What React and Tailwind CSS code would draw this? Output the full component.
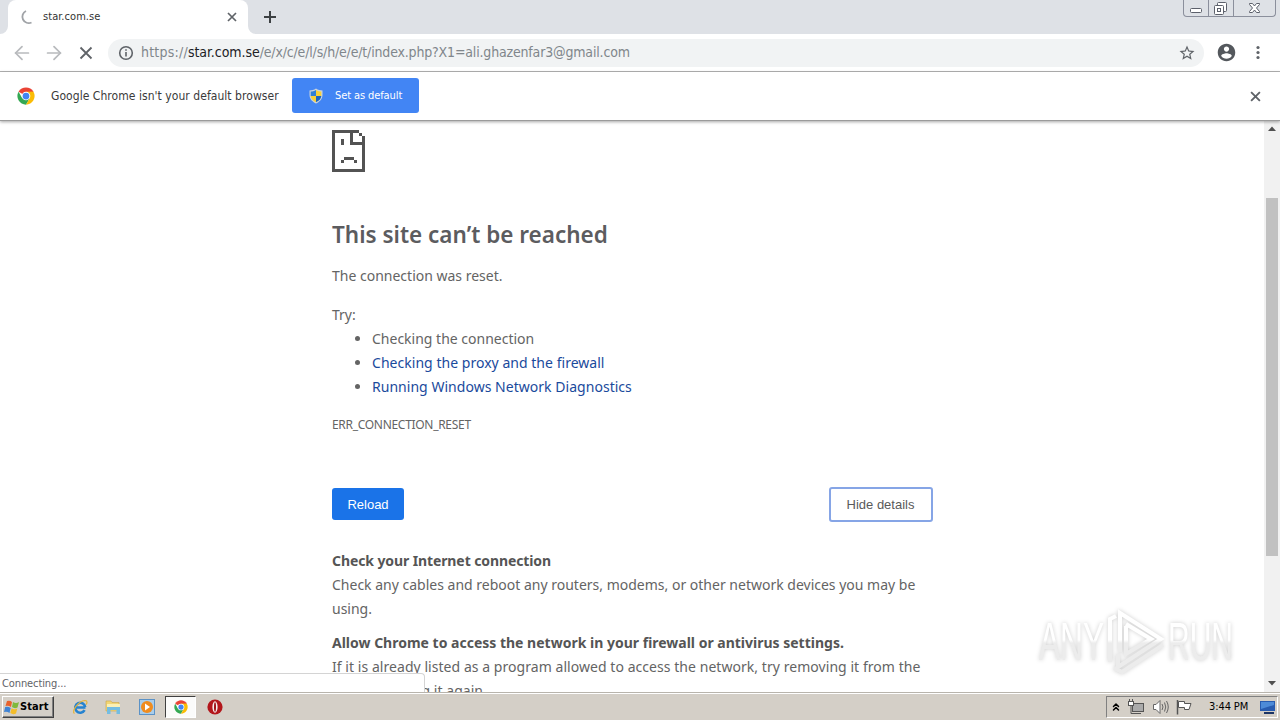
import { ArrowLeft, ArrowRight, ChevronsUp } from 'lucide-react';

const LINKS = ['Checking the proxy and the firewall', 'Running Windows Network Diagnostics'];

const ChromeLogo = ({ className }) => (
  <svg className={className} viewBox="0 0 48 48">
    <circle cx="24" cy="24" r="23" fill="#fff" />
    <path d="M24 24 L4.1 12.5 A23 23 0 0 1 43.9 12.5 Z" fill="#ea4335" />
    <path d="M4.1 12.5 A23 23 0 0 0 24 47 L34 29.7 L24 24 L14 29.7 Z" fill="#34a853" />
    <path d="M43.9 12.5 A23 23 0 0 1 24 47 L34 29.7 L24 13 Z" fill="#fbbc05" />
    <path d="M24 12.5 H43.9 L34 24 Z" fill="#fbbc05" />
    <circle cx="24" cy="24" r="11.5" fill="#fff" />
    <circle cx="24" cy="24" r="9" fill="#4285f4" />
  </svg>
);

const Shield = () => (
  <svg className="w-[14px] h-4" viewBox="0 0 14 16">
    <path d="M7 .5 C5 1.900 2.500 2.400 .5 2.400 V7 C.5 11.500 4 14 7 15.500 C10 14 13.500 11.500 13.500 7 V2.400 C11.500 2.400 9 1.900 7 .5Z" fill="#c9d3dc" />
    <path d="M7 2 C5 3.200 3.500 3.500 1.700 3.500 V8 H7Z" fill="#2f7fd6" />
    <path d="M7 2 C9 3.200 10.500 3.500 12.300 3.500 V8 H7Z" fill="#f7d038" />
    <path d="M1.700 8 H7 V14.200 C4 12.700 2 11 1.700 8Z" fill="#f7d038" />
    <path d="M12.300 8 H7 V14.200 C10 12.700 12 11 12.300 8Z" fill="#1d64bd" />
  </svg>
);

const Cross = ({ className }) => (
  <svg className={className} viewBox="0 0 10 10" fill="none" stroke="currentColor">
    <path d="M1 1 L9 9 M9 1 L1 9" strokeWidth="1.700" />
  </svg>
);

const SadPage = () => (
  <svg className="block w-[33px] h-[42px]" viewBox="0 0 33 42" fill="#535353" shapeRendering="crispEdges">
    <path d="M0 0H27V3H3V39H30V15H18V0H21V12H30V6H33V42H0Z" />
    <path d="M27 3H30V6H27Z M9 9H12V15H9Z M12 27H22V30H12Z M9 30H12V33H9Z M22 30H25V33H22Z" />
  </svg>
);

const WindowButtons = () => (
  <div className="flex w-[93px] h-[17px] border border-t-0 border-[#8b8f9c] rounded-b-[4px] text-[#5c606b]">
    <div className="w-[25px] border-r border-[#8b8f9c]">
      <svg className="w-6 h-4" viewBox="0 0 24 16" fill="#fff" stroke="currentColor">
        <rect x="6.500" y="8.500" width="11" height="4" rx="1" />
      </svg>
    </div>
    <div className="w-[25px] border-r border-[#8b8f9c]">
      <svg className="w-6 h-4" viewBox="0 0 24 16" fill="#fff" stroke="currentColor">
        <rect x="8.500" y="2.500" width="9" height="9" rx="1" />
        <rect x="5.500" y="5.500" width="9" height="9" rx="1" />
        <rect x="8.500" y="8.500" width="3" height="3" />
      </svg>
    </div>
    <svg className="w-[41px] h-4" viewBox="0 0 41 16" fill="#fff" stroke="currentColor">
      <path d="M15.500 3.500H18.500L20.500 6L22.500 3.500H25.500V4.500L22.500 8L25.500 11.500V12.500H22.500L20.500 10L18.500 12.500H15.500V11.500L18.500 8L15.500 4.500Z" />
    </svg>
  </div>
);

const TabStrip = () => (
  <div className="flex h-[34px] bg-[#dee1e6] pl-2">
    <div className="relative flex items-center w-[240px] h-[34px] bg-white rounded-t-lg pl-3 pr-[11px]">
      <svg className="absolute left-[-8px] bottom-0 w-2 h-2" viewBox="0 0 8 8" fill="#fff"><path d="M8 0V8H0A8 8 0 0 0 8 0Z" /></svg>
      <svg className="absolute right-[-8px] bottom-0 w-2 h-2" viewBox="0 0 8 8" fill="#fff"><path d="M0 0V8H8A8 8 0 0 1 0 0Z" /></svg>
      <svg className="w-4 h-4" viewBox="0 0 16 16" fill="none" stroke="#a0a3a7" strokeWidth="1.800">
        <path d="M6 2 A6.200 6.200 0 0 0 11.500 13.500" />
      </svg>
      <span className="flex-1 ml-[7px] pt-px text-[11px] tracking-[0.05px] text-[#333]">star.com.se</span>
      <Cross className="w-[10px] h-[10px] text-[#5f6368]" />
    </div>
    <svg className="w-3 h-3 ml-4 mt-[11px]" viewBox="0 0 12 12" stroke="#3c4043" strokeWidth="2"><path d="M6 0V12M0 6H12" /></svg>
    <div className="ml-auto mr-1"><WindowButtons /></div>
  </div>
);

const Toolbar = () => (
  <div className="flex items-center h-[38px] bg-white border-b border-[#b4b4b4] pl-[11px] pr-3">
    <ArrowLeft className="w-[22px] h-[22px]" color="#b8babd" strokeWidth={1.9} />
    <ArrowRight className="w-[22px] h-[22px] ml-[10px]" color="#b8babd" strokeWidth={1.9} />
    <svg className="w-[14px] h-[14px] ml-[14px]" viewBox="0 0 14 14" stroke="#5f6368" strokeWidth="1.800">
      <path d="M1.500 1.500L12.500 12.500M12.500 1.500L1.500 12.500" />
    </svg>
    <div className="flex items-center flex-1 h-7 ml-[15px] rounded-full bg-[#f1f3f4] pl-[10px] pr-[9px]">
      <svg className="w-4 h-4" viewBox="0 0 16 16" fill="none" stroke="#5f6368">
        <circle cx="8" cy="8" r="6.300" strokeWidth="1.600" />
        <path d="M8 7V11.500M8 4.300V5.800" strokeWidth="1.600" />
      </svg>
      <span className="flex-1 ml-[7px] pb-px text-[14px] tracking-[-0.17px] text-[#80868b] whitespace-nowrap">
        <span className="tracking-[0.22px]">https://</span>
        <span className="tracking-[-0.05px] text-[#202124]">star.com.se</span>
        /e/x/c/e/l/s/h/e/e/t/index.php?X1=ali.ghazenfar3@gmail.com
      </span>
      <svg className="w-[18px] h-[18px] mr-[-1px]" viewBox="0 0 24 24" fill="#5f6368">
        <path d="M22 9.240l-7.190-.62L12 2 9.190 8.630 2 9.240l5.460 4.730L5.820 21 12 17.270 18.180 21l-1.630-7.030L22 9.240zM12 15.400l-3.760 2.270 1-4.280-3.320-2.880 4.380-.38L12 6.100l1.710 4.040 4.380.38-3.320 2.880 1 4.280L12 15.400z" />
      </svg>
    </div>
    <svg className="w-[21px] h-[21px] ml-3 mr-px mb-px" viewBox="0 0 24 24" fill="#54585d">
      <path d="M12 2C6.480 2 2 6.480 2 12s4.480 10 10 10 10-4.480 10-10S17.520 2 12 2zm0 3c1.660 0 3 1.340 3 3s-1.340 3-3 3-3-1.340-3-3 1.340-3 3-3zm0 14.200c-2.500 0-4.710-1.280-6-3.220.030-1.990 4-3.080 6-3.080 1.990 0 5.970 1.090 6 3.080-1.290 1.940-3.500 3.220-6 3.220z" />
    </svg>
    <svg className="w-5 h-4 ml-[10px]" viewBox="0 0 20 16" fill="#5f6368">
      <circle cx="10" cy="2.500" r="1.600" /><circle cx="10" cy="7.500" r="1.600" /><circle cx="10" cy="12.500" r="1.600" />
    </svg>
  </div>
);

const DefaultBrowserBar = () => (
  <div className="relative z-10 flex items-center h-[49px] bg-white border-b border-[#9b9b9b] shadow-[0_1px_3px_rgba(0,0,0,0.35)] pl-[17px] pr-[19px]">
    <ChromeLogo className="w-[18px] h-[18px]" />
    <span className="w-[241px] ml-4 text-[12px] tracking-[0.05px] text-[#3a3a3a] whitespace-nowrap">Google Chrome isn't your default browser</span>
    <button className="flex items-center w-[127px] h-[35px] mb-px rounded-[3px] bg-[#4285f4] pl-[17px] text-white">
      <Shield />
      <span className="ml-3 pt-px text-[11px] tracking-[-0.1px] whitespace-nowrap">Set as default</span>
    </button>
    <Cross className="w-[11px] h-[11px] ml-auto text-[#5f6368]" />
  </div>
);

const ErrorPage = () => (
  <div className="w-[600px] ml-[332px] pt-[9px] font-['Noto_Sans',sans-serif] text-[14px] leading-6 text-[#646464]">
    <SadPage />
    <h1 className="mt-[48px] text-[22.5px] leading-[29px] font-semibold text-[#5c5c5f]">This site can’t be reached</h1>
    <p className="mt-[15px]">The connection was reset.</p>
    <p className="mt-[15px]">Try:</p>
    <ul className="list-disc pl-10">
      <li>Checking the connection</li>
      {LINKS.map(l => <li key={l}><a className="text-[#1a4a9c] tracking-[0.03px]">{l}</a></li>)}
    </ul>
    <div className="mt-[14px] text-[12px] tracking-[-0.3px]">ERR_CONNECTION_RESET</div>
    <div className="flex justify-between mt-[50px] mr-[-1px] font-['Liberation_Sans'] text-[13px]">
      <button className="w-[72px] h-8 mt-px rounded-[3px] bg-[#1a73e8] text-white pt-px">Reload</button>
      <button className="w-[104px] h-[35px] rounded-[3px] border-2 border-[#86a5e6] bg-white text-[#5a5a5a] pt-px pr-px">Hide details</button>
    </div>
    <div className="mt-[27px] font-bold tracking-[-0.1px] text-[#555]">Check your Internet connection</div>
    <div className="whitespace-nowrap">Check any cables and reboot any routers, modems, or other network devices you may be<br />using.</div>
    <div className="mt-[10px] font-bold text-[#555]">Allow Chrome to access the network in your firewall or antivirus settings.</div>
    <div className="tracking-[0.05px] whitespace-nowrap">If it is already listed as a program allowed to access the network, try removing it from the<br />list and adding it again.</div>
  </div>
);

const Scrollbar = () => (
  <div className="flex flex-col items-center w-4 h-full bg-[#f1f1f1]">
    <svg className="w-4 h-[17px]" viewBox="0 0 16 17" fill="#505050"><path d="M4 10L8 5.500L12 10Z" /></svg>
    <div className="w-3 h-[358px] mt-[60px] bg-[#c1c1c1]" />
    <svg className="w-4 h-[17px] mt-auto" viewBox="0 0 16 17" fill="#505050"><path d="M4 6L8 10.500L12 6Z" /></svg>
  </div>
);

const Watermark = () => (
  <svg className="absolute left-[1030px] top-[602px] w-[210px] h-[76px] overflow-visible drop-shadow-[0_0_2px_rgba(0,0,0,0.2)]" viewBox="0 0 210 76">
    <defs>
      <linearGradient id="fade" x1="0" y1="0" x2="0" y2="76" gradientUnits="userSpaceOnUse">
        <stop offset="0.500" stopColor="#fff" />
        <stop offset="0.540" stopColor="#ececec" />
      </linearGradient>
    </defs>
    <g fill="url(#fade)" fontFamily="Liberation Sans" fontSize="53">
      <text x="9" y="58" textLength="65" lengthAdjust="spacingAndGlyphs">ANY</text>
      <text x="138" y="58" textLength="65" lengthAdjust="spacingAndGlyphs">RUN</text>
    </g>
    <g fill="none" stroke="url(#fade)" strokeWidth="4">
      <path d="M90 50V11L131 37L88 65V52" />
      <path d="M80 60V17L86 14M96 24V52L121 37L96 22M84 66L92 70L133 43" />
    </g>
  </svg>
);

const Taskbar = () => (
  <div className="relative z-20 flex items-center h-[28px] bg-[#d4cfc7] border-t border-[#b8b4ac] shadow-[inset_0_1px_0_#fff] px-[2px]">
    <button className="flex items-center w-[52px] h-[22px] mt-px border border-t-white border-l-white border-r-[#404040] border-b-[#404040] bg-[#d4cfc7] shadow-[inset_-1px_-1px_0_#808080] pl-px">
      <svg className="w-4 h-4 shrink-0" viewBox="0 0 16 16">
        <path d="M3 2Q6 1 8 3L7 8Q4 6 1.500 7Z" fill="#e8622c" />
        <path d="M9 3Q12 5 15 3L13.500 8.500Q10.500 10 8 8Z" fill="#7fb93c" />
        <path d="M1.200 8Q4 7 6.700 9L5.500 14Q3 12 0 13Z" fill="#3f83d4" />
        <path d="M7.600 9.200Q10.500 11 13.300 9.500L12 14.500Q9 16 6.300 14Z" fill="#f4bd2a" />
      </svg>
      <span className="text-[11px] font-bold tracking-[0.1px] text-black">Start</span>
    </button>
    <svg className="w-4 h-4 ml-[18px]" viewBox="0 0 16 16" fill="none">
      <path d="M13.500 8.500H4.500M13.200 8.200A5 5 0 1 0 12.600 11.200" stroke="#2583d0" strokeWidth="2.600" />
      <path d="M2.500 14.500C-1 13 6 2 13 1.500C16 1.500 15 4.500 14 5.500" stroke="#e3b33a" strokeWidth="1.200" />
    </svg>
    <svg className="w-4 h-4 ml-[17px]" viewBox="0 0 16 16">
      <path d="M1 2H6L7 3.500H14V12H1Z" fill="#f2d675" stroke="#c9a548" strokeWidth=".6" />
      <path d="M2 5H15V8H2Z" fill="#fbf0b5" />
      <path d="M2 8H15V15H11.500V11H5.500V15H2Z" fill="#74bde2" />
    </svg>
    <svg className="w-4 h-4 ml-[18px]" viewBox="0 0 16 16">
      <rect x=".5" y=".5" width="15" height="15" fill="#a9cdea" stroke="#5b92c6" />
      <circle cx="8" cy="8" r="6" fill="#f08c1e" />
      <path d="M6 4.500L11 8L6 11.500Z" fill="#fff" />
    </svg>
    <div className="flex items-center justify-center w-[31px] h-[22px] ml-[10px] border border-t-[#404040] border-l-[#404040] border-r-white border-b-white bg-[#fbfbfa]">
      <ChromeLogo className="w-[14px] h-[14px]" />
    </div>
    <svg className="w-4 h-4 ml-[11px]" viewBox="0 0 16 16">
      <circle cx="8" cy="8" r="7.600" fill="#b3161b" />
      <ellipse cx="8" cy="8" rx="2.600" ry="5.800" fill="#f7eded" />
      <ellipse cx="8" cy="8" rx="1" ry="4.800" fill="#a01216" />
    </svg>
    <div className="flex items-center w-[172px] h-[22px] ml-auto border border-t-[#808080] border-l-[#808080] border-r-white border-b-white pl-[3px]">
      <ChevronsUp className="w-3 h-3 text-black" strokeWidth={3} />
      <svg className="w-4 h-4 ml-[6px]" viewBox="0 0 16 16" fill="#fff" stroke="#555">
        <rect x="4.500" y="4.500" width="11" height="8" fill="#aaa" />
        <rect x=".5" y="2.500" width="5" height="4" />
        <path d="M1.500 0V2.500M4.500 0V2.500M3 6.500V14.500H13" fill="none" />
      </svg>
      <svg className="w-[18px] h-4 ml-2" viewBox="0 0 18 16" fill="#fff" stroke="#666">
        <path d="M1.500 5.500H4L8 1.500V14.500L4 10.500H1.500Z" />
        <path d="M10 5Q12 8 10 11M12.500 3.500Q15 8 12.500 12.500M14.500 2Q18 8 14.500 14" fill="none" />
      </svg>
      <svg className="w-4 h-4 ml-[6px]" viewBox="0 0 16 16" fill="#fff" stroke="#555">
        <path d="M1.500 1V15.500" strokeWidth="1.500" />
        <path d="M2.500 2.500H8.500V4.500H15L13 10.500H8.500V8.500H2.500Z" />
      </svg>
      <span className="w-[51px] ml-[17px] pt-[2px] text-[11px] tracking-[-0.1px] text-black whitespace-nowrap">3:44 PM</span>
      <svg className="w-4 h-[14px]" viewBox="0 0 16 14">
        <path d="M0 1H15V11H0Z" fill="#285cb0" />
        <path d="M1 2H14V5L1 9Z" fill="#4d8bd8" />
        <path d="M4 12H14V14H4Z" fill="#1c3566" />
      </svg>
    </div>
  </div>
);

export default function App() {
  return (
    <div className="relative flex flex-col w-[1280px] h-[720px] overflow-hidden bg-white font-['DejaVu_Sans_Condensed','DejaVu_Sans',sans-serif]">
      <TabStrip />
      <Toolbar />
      <DefaultBrowserBar />
      <div className="flex flex-1 min-h-0 overflow-hidden">
        <div className="flex-1 overflow-hidden"><ErrorPage /></div>
        <Scrollbar />
      </div>
      <div className="absolute left-0 top-[673px] z-10 w-[425px] h-[20px] border-t border-r border-[#d4d4d4] rounded-tr-[4px] bg-white pl-[2px] text-[11px] leading-[19px] tracking-[-0.1px] text-[#5f6368]">
        Connecting...
      </div>
      <Watermark />
      <Taskbar />
    </div>
  );
}
